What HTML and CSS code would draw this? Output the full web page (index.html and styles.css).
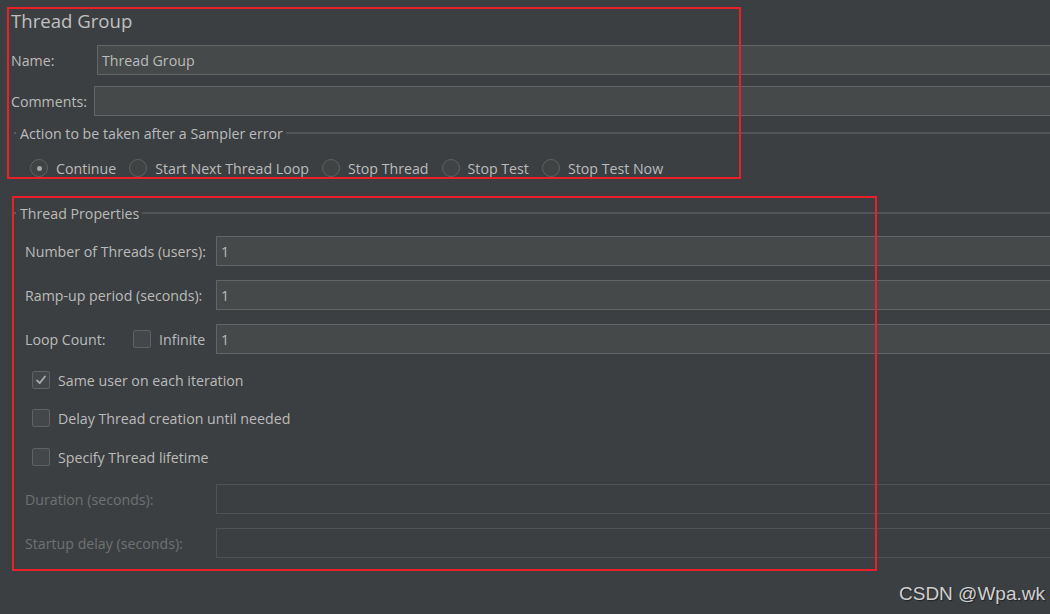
FILE: index.html
```html
<!DOCTYPE html>
<html>
<head>
<meta charset="utf-8">
<link rel="stylesheet" href="styles.css">
</head>
<body>
<div class="page">
  <div class="head">
    <h1 class="title">Thread Group</h1>
    <div class="form-row name-row">
      <span class="label label-name">Name:</span>
      <div class="input">Thread Group</div>
    </div>
    <div class="form-row comments-row">
      <span class="label label-comments">Comments:</span>
      <div class="input"></div>
    </div>
    <div class="group-head action-head">
      <span class="dash"></span>
      <span class="group-title">Action to be taken after a Sampler error</span>
      <span class="group-line"></span>
    </div>
    <div class="radio-row">
      <label class="radio-item"><span class="radio checked"></span>Continue</label>
      <label class="radio-item"><span class="radio"></span>Start Next Thread Loop</label>
      <label class="radio-item"><span class="radio"></span>Stop Thread</label>
      <label class="radio-item"><span class="radio"></span>Stop Test</label>
      <label class="radio-item"><span class="radio"></span>Stop Test Now</label>
    </div>
    <div class="group-head props-head">
      <span class="dash"></span>
      <span class="group-title">Thread Properties</span>
      <span class="group-line"></span>
    </div>
    <div class="props">
      <div class="form-row prop-row first">
        <span class="label label-prop">Number of Threads (users):</span>
        <div class="input">1</div>
      </div>
      <div class="form-row prop-row">
        <span class="label label-prop">Ramp-up period (seconds):</span>
        <div class="input">1</div>
      </div>
      <div class="form-row prop-row">
        <span class="label label-loop">Loop Count:</span>
        <span class="infinite"><span class="checkbox"></span>Infinite</span>
        <div class="input">1</div>
      </div>
      <div class="check-row c1">
        <span class="checkbox checked"><svg width="18" height="18" viewBox="0 0 18 18"><polyline points="4.5,9.5 7.5,12.5 13.5,5" fill="none" stroke="#a9abad" stroke-width="2" stroke-linecap="round" stroke-linejoin="round"/></svg></span>
        Same user on each iteration
      </div>
      <div class="check-row c2">
        <span class="checkbox"></span>
        Delay Thread creation until needed
      </div>
      <div class="check-row c3">
        <span class="checkbox"></span>
        Specify Thread lifetime
      </div>
      <div class="form-row prop-row disabled d1">
        <span class="label label-prop">Duration (seconds):</span>
        <div class="input input-disabled"></div>
      </div>
      <div class="form-row prop-row disabled">
        <span class="label label-prop">Startup delay (seconds):</span>
        <div class="input input-disabled"></div>
      </div>
    </div>
  </div>
  <div class="mark mark-top"></div>
  <div class="mark mark-bottom"></div>
  <div class="watermark">CSDN @Wpa.wk</div>
</div>
</body>
</html>
```

FILE: styles.css
```css
html, body {
  margin: 0;
  padding: 0;
  background: #3c3f41;
  overflow: hidden;
  height: 614px;
}

.page {
  position: relative;
  width: 1080px;
  height: 614px;
  font-family: "Open Sans", "Noto Sans", sans-serif;
  font-size: 14.2px;
  color: #bbbbbb;
}

.head {
  padding: 9px 0 0 11px;
}

.title {
  margin: 0;
  font-size: 18.6px;
  font-weight: normal;
  line-height: 24px;
  color: #c0c0c0;
}

.form-row {
  display: flex;
  align-items: center;
  height: 30px;
}

.name-row { margin-top: 12px; }
.comments-row { margin-top: 11px; }

.label { flex: none; white-space: nowrap; }
.label-name { width: 86px; }
.label-comments { width: 83px; }

.input {
  flex: 1;
  height: 30px;
  box-sizing: border-box;
  border: 1px solid #646464;
  border-right: none;
  background: #45494a;
  padding-left: 4px;
  display: flex;
  align-items: center;
  color: #bbbbbb;
}

.input-disabled {
  background: #3c3f41;
  border-color: #505354;
}

.group-head {
  display: flex;
  align-items: center;
  height: 20px;
}

.action-head { margin-top: 7px; }
.props-head { margin-top: 25px; }

.dash {
  width: 2px;
  height: 2px;
  margin-left: 3px;
  background: #5a5d5e;
  flex: none;
}

.group-title {
  margin-left: 4px;
  margin-right: 3px;
  white-space: nowrap;
}

.group-line {
  flex: 1;
  height: 2px;
  background: #535657;
}

.radio-row {
  display: flex;
  align-items: center;
  height: 20px;
  margin-top: 15px;
  margin-left: 19px;
  gap: 13px;
}

.radio-item {
  display: flex;
  align-items: center;
  gap: 8px;
  white-space: nowrap;
}

.radio {
  width: 18px;
  height: 18px;
  box-sizing: border-box;
  border-radius: 50%;
  border: 1px solid #5f6263;
  background: #3f4344;
  display: flex;
  align-items: center;
  justify-content: center;
  flex: none;
}

.radio.checked::after {
  content: "";
  width: 5px;
  height: 5px;
  border-radius: 50%;
  background: #a5a7a9;
}

.props {
  padding-left: 14px;
}

.prop-row { margin-top: 14px; }
.prop-row.first { margin-top: 13px; }
.prop-row.d1 { margin-top: 17px; }

.label-prop { width: 191px; }
.label-loop { width: 108px; }

.infinite {
  display: flex;
  align-items: center;
  gap: 8px;
  width: 83px;
  flex: none;
}

.checkbox {
  width: 18px;
  height: 18px;
  box-sizing: border-box;
  border: 1px solid #5f6263;
  border-radius: 2px;
  background: #43474a;
  flex: none;
  display: flex;
  align-items: center;
  justify-content: center;
}

.checkbox svg {
  display: block;
}

.check-row {
  display: flex;
  align-items: center;
  gap: 8px;
  height: 20px;
  padding-left: 7px;
}

.check-row.c1 { margin-top: 16px; }
.check-row.c2 { margin-top: 18px; }
.check-row.c3 { margin-top: 19px; }

.disabled .label { color: #6f7173; }

.mark {
  position: absolute;
  border: 2px solid #e8202a;
  box-sizing: border-box;
  pointer-events: none;
}

.mark-top {
  left: 7px;
  top: 7px;
  width: 734px;
  height: 172px;
}

.mark-bottom {
  left: 12px;
  top: 196px;
  width: 865px;
  height: 375px;
}

.watermark {
  position: absolute;
  left: 899px;
  top: 583px;
  font-family: "Liberation Sans", Arial, sans-serif;
  font-size: 19px;
  line-height: 22px;
  color: #cfd0d1;
  text-shadow: 1px 1px 1px #202224;
  white-space: nowrap;
}
```
